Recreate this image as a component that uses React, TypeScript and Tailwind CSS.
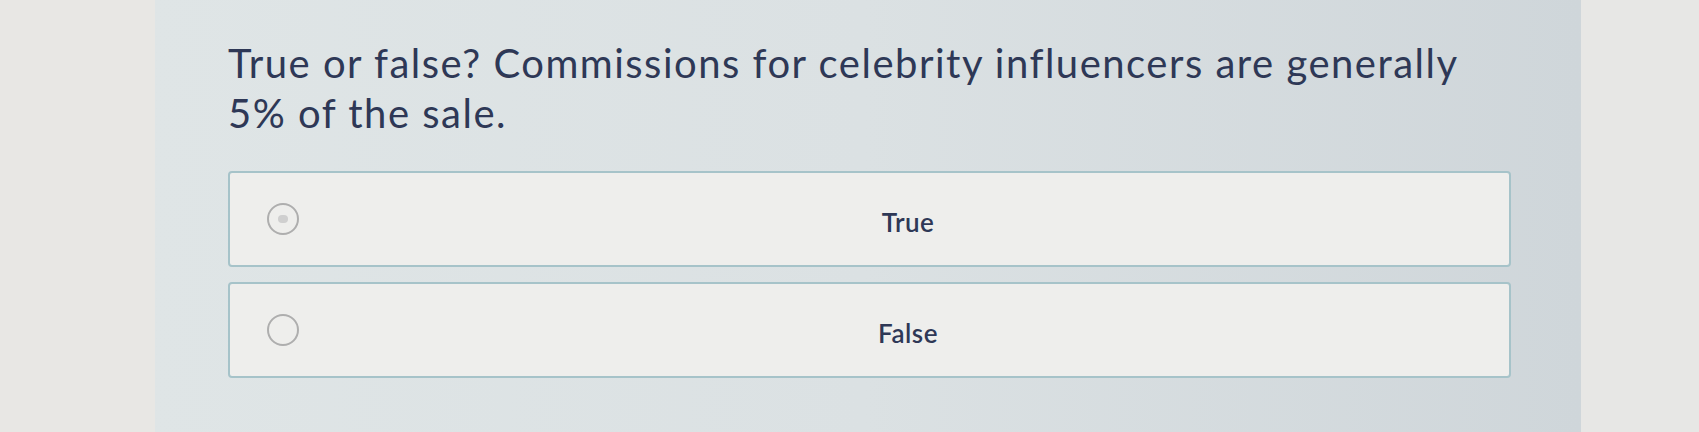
const options = [
  { label: "True", hover: true },
  { label: "False", hover: false },
];

function Radio({ hover }: { hover: boolean }) {
  return (
    <span className="flex h-[32px] w-[32px] shrink-0 items-center justify-center rounded-full border-2 border-[#aeaeae]">
      {hover && <span className="h-[8px] w-[10px] rounded-full bg-[#cfcfcf]"></span>}
    </span>
  );
}

export default function App() {
  return (
    <div className="flex h-[432px] w-[1699px] overflow-hidden font-['Lato',sans-serif] text-[#2e3856]">
      <div className="w-[155px] shrink-0 bg-[#e8e7e4]"></div>

      <div className="w-[1426px] shrink-0 bg-gradient-to-r from-[#dfe5e6] via-[#dbe1e3] to-[#cfd6da] pl-[73px] pr-[70px] pt-[38px]">
        <h1 className="w-[1250px] text-[40px] leading-[50px] font-normal tracking-[1.5px]">
          True or false? Commissions for celebrity influencers are generally 5% of the sale.
        </h1>

        <div className="mt-[33px] flex flex-col gap-[15px]">
          {options.map((option) => (
            <button
              key={option.label}
              type="button"
              className="flex h-[96px] w-full items-center rounded-[4px] border-2 border-[#a6c3c9] bg-[#eeeeec] pl-[37px]"
            >
              <Radio hover={option.hover} />
              <span className="ml-[8px] flex-1 pt-[7px] text-center text-[26px] font-semibold tracking-[0.5px]">
                {option.label}
              </span>
            </button>
          ))}
        </div>
      </div>

      <div className="flex-1 bg-[#e7e7e5]"></div>
    </div>
  );
}
